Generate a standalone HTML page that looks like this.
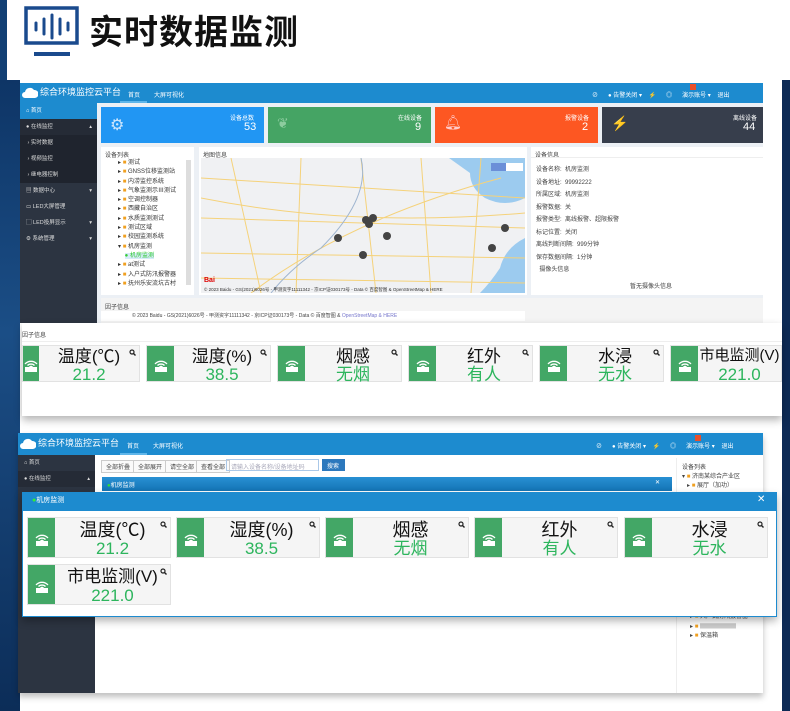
<!DOCTYPE html>
<html><head><meta charset="utf-8"><style>
*{margin:0;padding:0;box-sizing:border-box}
body{width:790px;height:711px;background:#fff;position:relative;overflow:hidden;font-family:"Liberation Sans","Noto Sans CJK SC",sans-serif;font-size:6px;color:#333}
.a{position:absolute}
.t{font-size:6px;color:#444;white-space:nowrap}
.card{position:absolute;background:#f5f5f5;border:1px solid #e2e2e2}
.card .ic{position:absolute;left:0;top:0;bottom:0;width:27px;background:#43a766}
.card .ic svg{position:absolute;left:6px;top:50%;margin-top:-8px}
.card .ti{position:absolute;left:27px;right:0;text-align:center;color:#111;white-space:nowrap;line-height:1}
.card .va{position:absolute;left:27px;right:0;text-align:center;color:#2db55d;white-space:nowrap;line-height:1}
.card .q{position:absolute;right:3px;top:3px}
.side div{height:16px;line-height:16px;color:#ddd;padding-left:6px;font-size:5.5px;white-space:nowrap}
</style></head><body>
<div class="a" style="left:0;top:0;width:7px;height:80px;background:#123f74"></div>
<div class="a" style="left:0;top:80px;width:20px;height:631px;background:linear-gradient(#0e3566,#1b4e86 40%,#0c2d58)"></div>
<div class="a" style="left:782px;top:80px;width:8px;height:631px;background:#0d2a55"></div>

<svg class="a" style="left:24px;top:6px" width="56" height="56" viewBox="0 0 56 56"><rect x="2" y="2" width="51" height="35" fill="none" stroke="#1a4a8d" stroke-width="3.5"/><rect x="10" y="46" width="36" height="4" fill="#1a4a8d"/><g stroke="#1a4a8d" stroke-width="3" stroke-linecap="round"><line x1="12" y1="17" x2="12" y2="24"/><line x1="20" y1="13" x2="20" y2="28"/><line x1="28" y1="9" x2="28" y2="32"/><line x1="36" y1="13" x2="36" y2="28"/><line x1="44" y1="17" x2="44" y2="24"/></g></svg>
<div class="a" style="left:89px;top:8px;font-size:34px;font-weight:bold;color:#111;letter-spacing:1px;font-family:'Noto Sans CJK SC',sans-serif;line-height:44px">实时数据监测</div>

<!-- SCREEN 1 -->
<div class="a" style="left:20px;top:83px;width:743px;height:240px;background:#ecf0f5"></div>
<div class="a" style="left:20px;top:83px;width:743px;height:20px;background:#1d8bcf"></div>
<svg class="a" style="left:22px;top:86px" width="16" height="13"><path d="M3 12a3 3 0 0 1 0-6 5 5 0 0 1 9-2 3.5 3.5 0 0 1 1 8z" fill="#fff"/></svg>
<div class="a" style="left:40px;top:87px;font-size:9px;line-height:10px;color:#fff;white-space:nowrap">综合环境监控云平台</div>
<div class="a t" style="left:128px;top:90px;color:#fff">首页</div>
<div class="a" style="left:120px;top:101px;width:27px;height:2px;background:#5fb6ea"></div>
<div class="a t" style="left:154px;top:90px;color:#fff">大屏可视化</div>
<div class="a t" style="left:592px;top:90px;color:#fff">⊘ &nbsp;&nbsp;&nbsp;&nbsp; ● 告警关闭 ▾ &nbsp;&nbsp; ⚡ &nbsp;&nbsp;&nbsp;&nbsp; ◎ &nbsp;&nbsp;&nbsp;&nbsp; 演示账号 ▾ &nbsp;&nbsp; 退出</div>
<div class="a" style="left:690px;top:84px;width:6px;height:6px;background:#e8502b"></div>
<div class="a side" style="left:20px;top:103px;width:77px;height:220px;background:#2c3441">
<div style="background:#1d8bcf;color:#fff">⌂ 首页</div>
<div style="background:#252b36">● 在线监控 <span style="float:right;margin-right:5px">▴</span></div>
<div style="background:#1f242e">&nbsp;› 实时数据</div>
<div style="background:#1f242e">&nbsp;› 视频监控</div>
<div style="background:#1f242e">&nbsp;› 继电器控制</div>
<div>▤ 数据中心 <span style="float:right;margin-right:5px">▾</span></div>
<div>▭ LED大屏管理</div>
<div>▢ LED投屏显示 <span style="float:right;margin-right:5px">▾</span></div>
<div>⚙ 系统管理 <span style="float:right;margin-right:5px">▾</span></div>
</div>
<div class="a" style="left:101px;top:107px;width:163px;height:36px;background:#2196f3"></div>
<div class="a" style="left:268px;top:107px;width:163px;height:36px;background:#45a464"></div>
<div class="a" style="left:435px;top:107px;width:163px;height:36px;background:#fd5722"></div>
<div class="a" style="left:602px;top:107px;width:161px;height:36px;background:#373e4c"></div>
<div class="a" style="left:110px;top:115px;font-size:16px;color:#cde6fd">⚙</div>
<div class="a" style="left:277px;top:115px;font-size:14px;color:#8dcc9f">❦</div>
<div class="a" style="left:444px;top:114px;font-size:14px;color:#fcc">🔔︎</div>
<div class="a" style="left:611px;top:115px;font-size:14px;color:#aaa">⚡</div>
<div class="a t" style="left:230px;top:113px;color:#fff">设备总数</div><div class="a" style="left:244px;top:121px;font-size:11px;color:#fff">53</div>
<div class="a t" style="left:398px;top:113px;color:#fff">在线设备</div><div class="a" style="left:415px;top:121px;font-size:11px;color:#fff">9</div>
<div class="a t" style="left:565px;top:113px;color:#fff">报警设备</div><div class="a" style="left:582px;top:121px;font-size:11px;color:#fff">2</div>
<div class="a t" style="left:733px;top:113px;color:#fff">离线设备</div><div class="a" style="left:743px;top:121px;font-size:11px;color:#fff">44</div>
<div class="a" style="left:101px;top:147px;width:93px;height:148px;background:#fff"></div>
<div class="a t" style="left:105px;top:150px">设备列表</div>
<div class="a t" style="left:118px;top:159px;line-height:9.3px;color:#333">▸ <span style="color:#f0a020">■</span> 测试<br>▸ <span style="color:#f0a020">■</span> GNSS位移监测站<br>▸ <span style="color:#f0a020">■</span> 内涝监控系统<br>▸ <span style="color:#f0a020">■</span> 气象监测示Ⅲ测试<br>▸ <span style="color:#f0a020">■</span> 空调控制器<br>▸ <span style="color:#f0a020">■</span> 西藏自治区<br>▸ <span style="color:#f0a020">■</span> 水质监测测试<br>▸ <span style="color:#f0a020">■</span> 测试区域<br>▸ <span style="color:#f0a020">■</span> 校园监测系统<br>▾ <span style="color:#f0a020">■</span> 机房监测<br>&nbsp;&nbsp;&nbsp;&nbsp;<span style="color:#3c3;background:#d6ebf9">● 机房监测</span><br>▸ <span style="color:#f0a020">■</span> at测试<br>▸ <span style="color:#f0a020">■</span> 入户式防汛报警器<br>▸ <span style="color:#f0a020">■</span> 抚州乐安流坑古村</div>
<div class="a" style="left:186px;top:160px;width:5px;height:125px;background:#ddd"></div>
<div class="a" style="left:199px;top:147px;width:328px;height:148px;background:#fff"></div>
<div class="a t" style="left:203px;top:150px">地图信息</div>
<div class="a" style="left:201px;top:158px;width:324px;height:135px;background:#f0f1f3;overflow:hidden">
<svg width="324" height="135"><path d="M248 0h76v40q-20 10-40 0-15-10-15-25z" fill="#9ccbef"/><path d="M324 80q-20 10-25 30-10 15-20 25h45z" fill="#9ccbef"/>
<g stroke="#f5d27a" stroke-width="1" fill="none"><path d="M0 20L324 40M0 60L324 70M0 95L324 100M0 120L324 125M30 0L60 135M100 0L95 135M160 0L175 135M220 0L230 135M280 0L270 135M0 40Q150 70 324 55M50 135Q150 60 300 20"/></g>
<path d="M160 0Q170 40 120 90Q90 110 70 135" stroke="#9fb5d0" fill="none"/>
<g fill="#444"><circle cx="165" cy="62" r="4"/><circle cx="172" cy="60" r="4"/><circle cx="168" cy="66" r="4"/><circle cx="137" cy="80" r="4"/><circle cx="186" cy="78" r="4"/><circle cx="162" cy="97" r="4"/><circle cx="291" cy="90" r="4"/><circle cx="304" cy="70" r="4"/></g>
<rect x="290" y="5" width="32" height="8" fill="#fff"/><rect x="290" y="5" width="15" height="8" fill="#6b8fd8"/>
<text x="3" y="124" font-size="7" fill="#d00" font-weight="bold">Bai</text><text x="3" y="133" font-size="4.5" fill="#333">© 2023 Baidu - GS(2021)6026号 - 甲测资字11111342 - 京ICP证030173号 - Data © 百度智图 &amp; OpenStreetMap &amp; HERE</text></svg></div>
<div class="a" style="left:531px;top:147px;width:232px;height:148px;background:#fff"></div>
<div class="a t" style="left:535px;top:150px">设备信息</div>
<div class="a" style="left:531px;top:157px;width:232px;height:1px;background:#eee"></div>
<div class="a t" style="left:536px;top:164px;line-height:12.5px">设备名称: &nbsp;机房监测<br>设备地址: &nbsp;99992222<br>所属区域: &nbsp;机房监测<br>报警数据: &nbsp;关<br>报警类型: &nbsp;离线报警、超限报警<br>标记位置: &nbsp;关闭<br>离线判断间隔: &nbsp;999分钟<br>保存数据间隔: &nbsp;1分钟<br>&nbsp;&nbsp;摄像头信息</div>
<div class="a t" style="left:630px;top:281px">暂无摄像头信息</div>
<div class="a" style="left:101px;top:298px;width:662px;height:25px;background:#f4f4f4"></div>
<div class="a t" style="left:105px;top:302px">因子信息</div>
<div class="a" style="left:101px;top:311px;width:93px;height:10px;background:#fff"></div>
<div class="a" style="left:130px;top:311px;width:395px;height:10px;background:#fff"></div>
<div class="a t" style="left:132px;top:312px;font-size:5px">© 2023 Baidu - GS(2021)6026号 - 甲测资字11111342 - 京ICP证030173号 - Data © 百度智图 &amp; <span style="color:#77c">OpenStreetMap &amp; HERE</span></div>

<!-- overlay 1 -->
<div class="a" style="left:22px;top:323px;width:760px;height:93px;background:#fff;box-shadow:0 4px 8px rgba(0,0,0,.3)"></div>
<div class="a" style="left:22px;top:326px;width:760px;height:16px;border-bottom:1px solid #eee"></div>
<div class="a t" style="left:22px;top:330px">因子信息</div>

<div class="card" style="left:22px;top:345px;width:118px;height:37px"><div class="ic" style="width:16px"><svg style="left:0" width="16" height="16" viewBox="0 0 16 16"><path d="M2 8a8 8 0 0 1 12 0M4.5 9.5a5 5 0 0 1 7 0M6.5 11a2.5 2.5 0 0 1 3 0" stroke="#fff" fill="none" stroke-width="1.3"/><rect x="2" y="11" width="12" height="5" fill="#fff"/></svg></div><div class="ti" style="left:16px;top:2px;font-size:17px">温度(℃)</div><div class="va" style="left:16px;top:20px;font-size:17px">21.2</div><svg class="q" width="7" height="7" viewBox="0 0 7 7"><circle cx="3" cy="3" r="2" stroke="#222" stroke-width="1.2" fill="none"/><path d="M4.5 4.5L6.5 6.5" stroke="#222" stroke-width="1.4"/></svg></div>

<div class="card" style="left:146px;top:345px;width:125px;height:37px"><div class="ic"><svg width="16" height="16" viewBox="0 0 16 16"><path d="M2 8a8 8 0 0 1 12 0M4.5 9.5a5 5 0 0 1 7 0M6.5 11a2.5 2.5 0 0 1 3 0" stroke="#fff" fill="none" stroke-width="1.3"/><rect x="2" y="11" width="12" height="5" fill="#fff"/></svg></div><div class="ti" style="top:2px;font-size:17px">湿度(%)</div><div class="va" style="top:20px;font-size:17px">38.5</div><svg class="q" width="7" height="7" viewBox="0 0 7 7"><circle cx="3" cy="3" r="2" stroke="#222" stroke-width="1.2" fill="none"/><path d="M4.5 4.5L6.5 6.5" stroke="#222" stroke-width="1.4"/></svg></div>

<div class="card" style="left:277px;top:345px;width:125px;height:37px"><div class="ic"><svg width="16" height="16" viewBox="0 0 16 16"><path d="M2 8a8 8 0 0 1 12 0M4.5 9.5a5 5 0 0 1 7 0M6.5 11a2.5 2.5 0 0 1 3 0" stroke="#fff" fill="none" stroke-width="1.3"/><rect x="2" y="11" width="12" height="5" fill="#fff"/></svg></div><div class="ti" style="top:2px;font-size:17px">烟感</div><div class="va" style="top:20px;font-size:17px">无烟</div><svg class="q" width="7" height="7" viewBox="0 0 7 7"><circle cx="3" cy="3" r="2" stroke="#222" stroke-width="1.2" fill="none"/><path d="M4.5 4.5L6.5 6.5" stroke="#222" stroke-width="1.4"/></svg></div>

<div class="card" style="left:408px;top:345px;width:125px;height:37px"><div class="ic"><svg width="16" height="16" viewBox="0 0 16 16"><path d="M2 8a8 8 0 0 1 12 0M4.5 9.5a5 5 0 0 1 7 0M6.5 11a2.5 2.5 0 0 1 3 0" stroke="#fff" fill="none" stroke-width="1.3"/><rect x="2" y="11" width="12" height="5" fill="#fff"/></svg></div><div class="ti" style="top:2px;font-size:17px">红外</div><div class="va" style="top:20px;font-size:17px">有人</div><svg class="q" width="7" height="7" viewBox="0 0 7 7"><circle cx="3" cy="3" r="2" stroke="#222" stroke-width="1.2" fill="none"/><path d="M4.5 4.5L6.5 6.5" stroke="#222" stroke-width="1.4"/></svg></div>

<div class="card" style="left:539px;top:345px;width:125px;height:37px"><div class="ic"><svg width="16" height="16" viewBox="0 0 16 16"><path d="M2 8a8 8 0 0 1 12 0M4.5 9.5a5 5 0 0 1 7 0M6.5 11a2.5 2.5 0 0 1 3 0" stroke="#fff" fill="none" stroke-width="1.3"/><rect x="2" y="11" width="12" height="5" fill="#fff"/></svg></div><div class="ti" style="top:2px;font-size:17px">水浸</div><div class="va" style="top:20px;font-size:17px">无水</div><svg class="q" width="7" height="7" viewBox="0 0 7 7"><circle cx="3" cy="3" r="2" stroke="#222" stroke-width="1.2" fill="none"/><path d="M4.5 4.5L6.5 6.5" stroke="#222" stroke-width="1.4"/></svg></div>

<div class="card" style="left:670px;top:345px;width:112px;height:37px"><div class="ic"><svg width="16" height="16" viewBox="0 0 16 16"><path d="M2 8a8 8 0 0 1 12 0M4.5 9.5a5 5 0 0 1 7 0M6.5 11a2.5 2.5 0 0 1 3 0" stroke="#fff" fill="none" stroke-width="1.3"/><rect x="2" y="11" width="12" height="5" fill="#fff"/></svg></div><div class="ti" style="top:2px;font-size:15px">市电监测(V)</div><div class="va" style="top:20px;font-size:17px">221.0</div></div>

<!-- SCREEN 2 -->
<div class="a" style="left:18px;top:433px;width:745px;height:260px;background:#fff;box-shadow:0 4px 6px rgba(0,0,0,.25)"></div>
<div class="a" style="left:18px;top:433px;width:745px;height:22px;background:#1d8bcf"></div>
<svg class="a" style="left:20px;top:437px" width="16" height="13"><path d="M3 12a3 3 0 0 1 0-6 5 5 0 0 1 9-2 3.5 3.5 0 0 1 1 8z" fill="#fff"/></svg>
<div class="a" style="left:38px;top:438px;font-size:9px;line-height:10px;color:#fff;white-space:nowrap">综合环境监控云平台</div>
<div class="a t" style="left:127px;top:441px;color:#fff">首页</div>
<div class="a" style="left:120px;top:453px;width:27px;height:2px;background:#5fb6ea"></div>
<div class="a t" style="left:153px;top:441px;color:#fff">大屏可视化</div>
<div class="a t" style="left:596px;top:441px;color:#fff">⊘ &nbsp;&nbsp;&nbsp;&nbsp; ● 告警关闭 ▾ &nbsp;&nbsp; ⚡ &nbsp;&nbsp;&nbsp;&nbsp; ◎ &nbsp;&nbsp;&nbsp;&nbsp; 演示账号 ▾ &nbsp;&nbsp; 退出</div>
<div class="a" style="left:695px;top:435px;width:6px;height:6px;background:#e8502b"></div>
<div class="a side" style="left:18px;top:455px;width:77px;height:238px;background:#2c3441">
<div>⌂ 首页</div><div style="background:#252b36">● 在线监控 <span style="float:right;margin-right:5px">▴</span></div>
</div>
<div class="a" style="left:95px;top:455px;width:668px;height:238px;background:#fff"></div>
<div class="a t" style="left:101px;top:460px;border:1px solid #ccc;padding:1px 4px;background:#fafafa">全部折叠</div>
<div class="a t" style="left:133px;top:460px;border:1px solid #ccc;padding:1px 4px;background:#fafafa">全部展开</div>
<div class="a t" style="left:165px;top:460px;border:1px solid #ccc;padding:1px 4px;background:#fafafa">请空全部</div>
<div class="a t" style="left:196px;top:460px;border:1px solid #ccc;padding:1px 4px;background:#fafafa">查看全部</div>
<div class="a t" style="left:226px;top:459px;width:93px;height:12px;border:1px solid #aac8e8;padding:2px 4px;color:#aab">请输入设备名称/设备地址码</div>
<div class="a t" style="left:322px;top:459px;width:23px;height:12px;background:#2c78bd;color:#fff;padding:2px 5px">搜索</div>
<div class="a" style="left:102px;top:477px;width:570px;height:14px;background:linear-gradient(#2890d3,#1474b5)"></div>
<div class="a t" style="left:107px;top:480px;color:#fff"><span style="color:#3d3">●</span>机房监测</div>
<div class="a t" style="left:655px;top:479px;color:#fff">✕</div>
<div class="a" style="left:676px;top:458px;width:1px;height:235px;background:#eee"></div>
<div class="a t" style="left:682px;top:462px">设备列表</div>
<div class="a t" style="left:682px;top:473px;line-height:9px">▾ <span style="color:#f0a020">■</span> 济南某综合产业区<br>&nbsp;&nbsp;&nbsp;▸ <span style="color:#f0a020">■</span> 展厅（加功）</div>
<div class="a t" style="left:690px;top:613px;line-height:9.5px">▸ <span style="color:#f0a020">■</span> 入户式防汛报警器<br>▸ <span style="color:#f0a020">■</span> <span style="color:#ccc">▇▇▇▇▇▇</span><br>▸ <span style="color:#f0a020">■</span> 保温箱</div>

<!-- overlay 2 -->
<div class="a" style="left:22px;top:492px;width:755px;height:125px;background:#fff;border:1px solid #1d8bcf;box-shadow:0 4px 8px rgba(0,0,0,.3)"></div>
<div class="a" style="left:22px;top:492px;width:755px;height:19px;background:#1d8bcf"></div>
<div class="a" style="left:32px;top:497px;font-size:7px;line-height:8px;color:#fff;white-space:nowrap"><span style="color:#3e3">●</span>机房监测</div>
<div class="a" style="left:757px;top:495px;font-size:10px;line-height:10px;color:#fff">✕</div>

<div class="card" style="left:27px;top:517px;width:144px;height:41px"><div class="ic"><svg width="16" height="16" viewBox="0 0 16 16"><path d="M2 8a8 8 0 0 1 12 0M4.5 9.5a5 5 0 0 1 7 0M6.5 11a2.5 2.5 0 0 1 3 0" stroke="#fff" fill="none" stroke-width="1.3"/><rect x="2" y="11" width="12" height="5" fill="#fff"/></svg></div><div class="ti" style="top:3px;font-size:18px">温度(℃)</div><div class="va" style="top:22px;font-size:17px">21.2</div><svg class="q" width="7" height="7" viewBox="0 0 7 7"><circle cx="3" cy="3" r="2" stroke="#222" stroke-width="1.2" fill="none"/><path d="M4.5 4.5L6.5 6.5" stroke="#222" stroke-width="1.4"/></svg></div>
<div class="card" style="left:176px;top:517px;width:144px;height:41px"><div class="ic"><svg width="16" height="16" viewBox="0 0 16 16"><path d="M2 8a8 8 0 0 1 12 0M4.5 9.5a5 5 0 0 1 7 0M6.5 11a2.5 2.5 0 0 1 3 0" stroke="#fff" fill="none" stroke-width="1.3"/><rect x="2" y="11" width="12" height="5" fill="#fff"/></svg></div><div class="ti" style="top:3px;font-size:18px">湿度(%)</div><div class="va" style="top:22px;font-size:17px">38.5</div><svg class="q" width="7" height="7" viewBox="0 0 7 7"><circle cx="3" cy="3" r="2" stroke="#222" stroke-width="1.2" fill="none"/><path d="M4.5 4.5L6.5 6.5" stroke="#222" stroke-width="1.4"/></svg></div>
<div class="card" style="left:325px;top:517px;width:144px;height:41px"><div class="ic"><svg width="16" height="16" viewBox="0 0 16 16"><path d="M2 8a8 8 0 0 1 12 0M4.5 9.5a5 5 0 0 1 7 0M6.5 11a2.5 2.5 0 0 1 3 0" stroke="#fff" fill="none" stroke-width="1.3"/><rect x="2" y="11" width="12" height="5" fill="#fff"/></svg></div><div class="ti" style="top:3px;font-size:18px">烟感</div><div class="va" style="top:22px;font-size:17px">无烟</div><svg class="q" width="7" height="7" viewBox="0 0 7 7"><circle cx="3" cy="3" r="2" stroke="#222" stroke-width="1.2" fill="none"/><path d="M4.5 4.5L6.5 6.5" stroke="#222" stroke-width="1.4"/></svg></div>
<div class="card" style="left:474px;top:517px;width:144px;height:41px"><div class="ic"><svg width="16" height="16" viewBox="0 0 16 16"><path d="M2 8a8 8 0 0 1 12 0M4.5 9.5a5 5 0 0 1 7 0M6.5 11a2.5 2.5 0 0 1 3 0" stroke="#fff" fill="none" stroke-width="1.3"/><rect x="2" y="11" width="12" height="5" fill="#fff"/></svg></div><div class="ti" style="top:3px;font-size:18px">红外</div><div class="va" style="top:22px;font-size:17px">有人</div><svg class="q" width="7" height="7" viewBox="0 0 7 7"><circle cx="3" cy="3" r="2" stroke="#222" stroke-width="1.2" fill="none"/><path d="M4.5 4.5L6.5 6.5" stroke="#222" stroke-width="1.4"/></svg></div>
<div class="card" style="left:624px;top:517px;width:144px;height:41px"><div class="ic"><svg width="16" height="16" viewBox="0 0 16 16"><path d="M2 8a8 8 0 0 1 12 0M4.5 9.5a5 5 0 0 1 7 0M6.5 11a2.5 2.5 0 0 1 3 0" stroke="#fff" fill="none" stroke-width="1.3"/><rect x="2" y="11" width="12" height="5" fill="#fff"/></svg></div><div class="ti" style="top:3px;font-size:18px">水浸</div><div class="va" style="top:22px;font-size:17px">无水</div><svg class="q" width="7" height="7" viewBox="0 0 7 7"><circle cx="3" cy="3" r="2" stroke="#222" stroke-width="1.2" fill="none"/><path d="M4.5 4.5L6.5 6.5" stroke="#222" stroke-width="1.4"/></svg></div>
<div class="card" style="left:27px;top:564px;width:144px;height:41px"><div class="ic"><svg width="16" height="16" viewBox="0 0 16 16"><path d="M2 8a8 8 0 0 1 12 0M4.5 9.5a5 5 0 0 1 7 0M6.5 11a2.5 2.5 0 0 1 3 0" stroke="#fff" fill="none" stroke-width="1.3"/><rect x="2" y="11" width="12" height="5" fill="#fff"/></svg></div><div class="ti" style="top:3px;font-size:17px">市电监测(V)</div><div class="va" style="top:22px;font-size:17px">221.0</div><svg class="q" width="7" height="7" viewBox="0 0 7 7"><circle cx="3" cy="3" r="2" stroke="#222" stroke-width="1.2" fill="none"/><path d="M4.5 4.5L6.5 6.5" stroke="#222" stroke-width="1.4"/></svg></div>
</body></html>
